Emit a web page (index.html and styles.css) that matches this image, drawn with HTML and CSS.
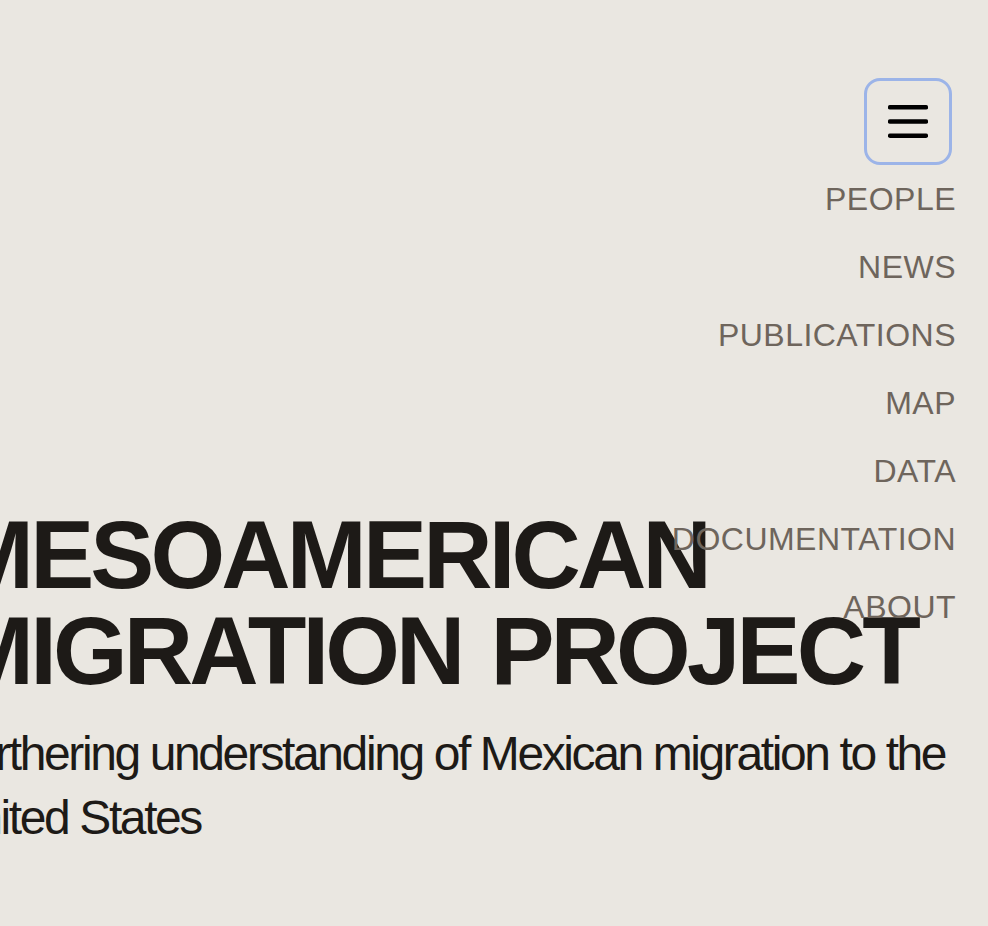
FILE: index.html
```html
<!DOCTYPE html>
<html lang="en">
<head>
<meta charset="utf-8">
<title>Mesoamerican Migration Project</title>
<link rel="stylesheet" href="styles.css">
</head>
<body>
<header class="site-header">
  <div class="menu-wrap">
    <button class="menu-button" aria-label="Menu">
      <svg class="menu-icon" viewBox="0 0 40 33" width="40" height="33" aria-hidden="true">
        <line x1="2" y1="2.3" x2="38" y2="2.3"/>
        <line x1="2" y1="16.5" x2="38" y2="16.5"/>
        <line x1="2" y1="30.7" x2="38" y2="30.7"/>
      </svg>
    </button>
    <nav class="menu">
      <a href="#">PEOPLE</a>
      <a href="#">NEWS</a>
      <a href="#">PUBLICATIONS</a>
      <a href="#">MAP</a>
      <a href="#">DATA</a>
      <a href="#">DOCUMENTATION</a>
      <a href="#">ABOUT</a>
    </nav>
  </div>
</header>
<main class="hero">
  <h1 class="hero-title">MESOAMERICAN MIGRATION PROJECT</h1>
  <p class="hero-sub">Furthering understanding of Mexican migration to the United States</p>
</main>
</body>
</html>
```

FILE: styles.css
```css
html, body {
  margin: 0;
  padding: 0;
}
body {
  background: #eae7e1;
  color: #1d1a17;
  font-family: "Liberation Sans", Arial, sans-serif;
  overflow: hidden;
  min-height: 926px;
}
.site-header {
  display: flex;
  justify-content: flex-end;
  padding: 78px 36px 0 0;
}
.menu-wrap {
  position: relative;
}
.menu-button {
  box-sizing: border-box;
  width: 88px;
  height: 87px;
  border: 3px solid #9cb4e8;
  border-radius: 16px;
  background: transparent;
  display: flex;
  align-items: center;
  justify-content: center;
  padding: 0;
  cursor: pointer;
}
.menu-icon line {
  stroke: #000;
  stroke-width: 4.4;
  stroke-linecap: round;
}
.menu {
  position: absolute;
  top: 87px;
  right: -4px;
  display: flex;
  flex-direction: column;
  align-items: flex-end;
  z-index: 2;
}
.menu a {
  font-size: 32px;
  line-height: 68px;
  color: #6e655c;
  text-decoration: none;
  white-space: nowrap;
  letter-spacing: 0.015em;
}
.hero {
  margin-left: -46px;
  width: 1001px;
  padding-top: 342px;
}
.hero-title {
  margin: 0;
  font-size: 96px;
  line-height: 96px;
  font-weight: 700;
  letter-spacing: -0.04em;
  word-spacing: 6px;
  color: #1d1a17;
}
.hero-sub {
  margin: 23px 0 0 -10px;
  font-size: 48px;
  line-height: 64px;
  letter-spacing: -0.05em;
  color: #1d1a17;
}
```
